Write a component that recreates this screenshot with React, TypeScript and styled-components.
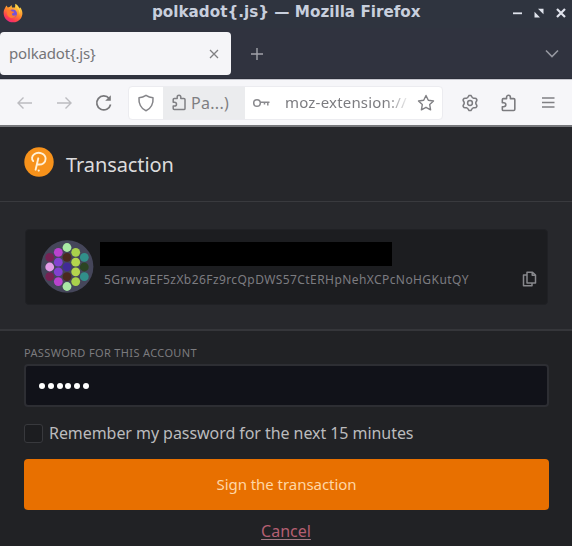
import React from 'react';
import styled, { createGlobalStyle } from 'styled-components';

const GlobalStyle = createGlobalStyle`
  * { box-sizing: border-box; }
  html, body { margin: 0; padding: 0; background: #212225; overflow: hidden; }
`;

const Window = styled.div`
  width: 572px;
  height: 546px;
  display: flex;
  flex-direction: column;
  overflow: hidden;
  background: #212225;
  font-family: 'Noto Sans', sans-serif;
`;

const Label = styled.span<{ $size: number; $spacing?: number; $color: string; $font?: string; $weight?: number }>`
  font-family: ${p => p.$font ?? "'Noto Sans'"}, sans-serif;
  font-size: ${p => p.$size}px;
  font-weight: ${p => p.$weight ?? 400};
  letter-spacing: ${p => p.$spacing ?? 0}px;
  color: ${p => p.$color};
  line-height: 1.25;
  white-space: nowrap;
`;

const TitleBar = styled.header`
  height: 28px;
  display: grid;
  grid-template-columns: 149px 1fr auto;
  align-items: center;
  padding: 0 4px 3px 3px;
  background: #2f343f;
`;
const TitleText = styled.div` display: flex; `;
const WindowButtons = styled.div` display: flex; gap: 8px; svg { display: block; } `;

const TabBar = styled.nav`
  height: 51px;
  display: flex;
  align-items: flex-start;
  padding-top: 4px;
  background: #30333f;
  border-bottom: 1px solid #2a2d38;
`;
const Tab = styled.div`
  width: 231px;
  height: 43px;
  display: flex;
  align-items: center;
  justify-content: space-between;
  padding: 0 11px 0 9px;
  border-radius: 4px;
  background: #f5f5f8;
`;
const TabAction = styled.div<{ $left?: number; $right?: number }>`
  height: 43px;
  display: flex;
  align-items: center;
  margin-left: ${p => (p.$left !== undefined ? `${p.$left}px` : 'auto')};
  margin-right: ${p => p.$right ?? 0}px;
`;

const Toolbar = styled.div`
  height: 48px;
  display: flex;
  align-items: center;
  padding: 0 15px 0 15px;
  background: #f6f6f9;
  border-top: 1px solid #c5c6cd;
  border-bottom: 2px solid #77787c;
`;
const NavButtons = styled.div` width: 113px; display: flex; gap: 20px; svg { display: block; } `;
const UrlBar = styled.div`
  width: 315px;
  height: 34px;
  display: flex;
  align-items: center;
  background: #fff;
  border: 1px solid #ececf0;
  border-radius: 4px;
  overflow: hidden;
`;
const Cell = styled.div<{ $w: number }>`
  width: ${p => p.$w}px;
  flex: none;
  display: flex;
  justify-content: center;
`;
const Identity = styled.div`
  width: 82px;
  flex: none;
  height: 32px;
  display: flex;
  align-items: center;
  gap: 3px;
  padding-left: 8px;
  background: #ebecee;
`;
const Address = styled.div`
  flex: 1;
  display: flex;
  padding-left: 7px;
  overflow: hidden;
  mask-image: linear-gradient(to right, #000 82%, rgba(0, 0, 0, 0.15) 98%);
`;
const ToolButtons = styled.div` margin-left: auto; display: flex; gap: 21px; svg { display: block; } `;

const PageHeader = styled.div`
  height: 75px;
  display: flex;
  align-items: center;
  gap: 12px;
  padding: 0 24px;
  background: #26272b;
  border-bottom: 1px solid #393a3e;
  > svg { margin-bottom: 4px; }
`;
const AccountArea = styled.section`
  height: 129px;
  padding: 27px 24px 0 25px;
  background: #27282c;
  border-bottom: 2px solid #35363a;
`;
const Card = styled.div`
  height: 76px;
  display: flex;
  align-items: center;
  padding: 0 10px 0 15px;
  border-radius: 4px;
  background: #1c1d20;
  border: 1px solid #202125;
  > svg { margin-bottom: 2px; }
`;
const AccountText = styled.div`
  flex: 1;
  height: 50px;
  margin-left: 6px;
  display: flex;
  flex-direction: column;
`;
const Redacted = styled.div` width: 292px; height: 24px; flex: none; background: #000; `;
const KeyText = styled.div` padding: 6px 0 0 4px; display: flex; `;
const CopyButton = styled.div` align-self: flex-end; padding-bottom: 17px; svg { display: block; } `;

const Form = styled.form`
  flex: 1;
  display: flex;
  flex-direction: column;
  padding: 14px 24px 0;
`;
const FieldLabel = styled.div` height: 19px; padding-top: 1px; display: flex; `;
const PasswordField = styled.div`
  height: 43px;
  width: 525px;
  display: flex;
  align-items: center;
  gap: 2.8px;
  padding-left: 13px;
  border: 2px solid #2d2e33;
  border-radius: 4px;
  background: #111219;
`;
const Dot = styled.i` width: 6px; height: 6px; border-radius: 50%; background: #fff; `;
const Remember = styled.label`
  height: 52px;
  display: flex;
  align-items: center;
  gap: 6px;
`;
const Checkbox = styled.span`
  width: 19px;
  height: 19px;
  border: 1px solid #38393d;
  border-radius: 3px;
  background: #1c1d20;
`;
const SignButton = styled.div`
  width: 525px;
  height: 51px;
  display: flex;
  align-items: center;
  justify-content: center;
  border-radius: 4px;
  background: #e87000;
`;
const CancelRow = styled.div` display: flex; justify-content: center; padding-top: 11px; `;
const CancelLabel = styled(Label)`
  text-decoration: underline;
  text-decoration-color: #a07a84;
  text-underline-offset: 2px;
`;

const FirefoxLogo = () => (
  <svg width="20" height="20" viewBox="0 0 20 20">
    <defs>
      <linearGradient id="flame" x1="0.8" y1="0.05" x2="0.25" y2="1">
        <stop offset="0" stopColor="#ffe14a" />
        <stop offset="0.45" stopColor="#ff8a2a" />
        <stop offset="0.8" stopColor="#fb3a53" />
        <stop offset="1" stopColor="#e5248b" />
      </linearGradient>
    </defs>
    <path d="M2 5 3.4 2.5 4.8 4.4 7 3.8 8.5 2 9 4.4 12 4.5 12.4.8C15.4 2.5 15.5 4 16.5 5.5L17 4.2C20 7.4 20.2 12.3 17.6 15.7 14.5 19.8 8.2 20.7 4 17.2.4 14.3-.4 8.8 2 5Z" fill="url(#flame)" />
    <path d="M6.3 8.4C8.5 5.2 14 6.5 14 10.8 14 14.2 10.1 15.7 7.5 13.7 5.9 12.5 5.3 10.2 6.3 8.4Z" fill="#7752d8" />
    <path d="M4 7.5C6 6 8 7 9 8.4 12 8.2 11.2 10 9.2 10.2 8.1 12.8 11 13.4 13 11.8 11.7 16.3 5.5 15.8 4.2 11.8Z" fill="#ff7a30" />
    <path d="M12.4 1C13.7 5 17.2 7 16.6 11.7 18 8.2 16 5.6 14.9 4.6Z" fill="#ffe04b" />
  </svg>
);

const PuzzleIcon = ({ size = 17, color = '#808084' }: { size?: number; color?: string }) => (
  <svg width={size} height={size} viewBox="0 0 17 17" fill="none" stroke={color} strokeWidth="1.5" strokeLinejoin="round">
    <path d="M2.2 6.2V5.4Q2.2 4.4 3.2 4.4H6.2V3C6.2.6 9.8.6 9.8 3V4.4H12.900Q14 4.400 14 5.500V14.500Q14 15.600 12.900 15.600H3.200Q2.200 15.600 2.200 14.600V12H3.400C6.200 12 6.200 8.300 3.400 8.300H2.200Z" />
  </svg>
);

const gear = Array.from({ length: 48 }, (_, i) => {
  const a = (i / 48) * Math.PI * 2;
  const r = 6.7 + 0.9 * Math.tanh(2.2 * Math.cos(6 * a));
  return `${(9 + r * Math.sin(a)).toFixed(2)},${(9 - r * Math.cos(a)).toFixed(2)}`;
}).join(' ');

const identiconDots: [number, number, string][] = [
  [26, 7.5, '#a9e9a5'],
  [17.3, 12.3, '#b943ce'], [34.7, 12.3, '#a9d04c'],
  [8.7, 17.3, '#752253'], [26, 17.3, '#4a2a1e'], [43.3, 17.3, '#318f8a'],
  [17.3, 22.2, '#8241d0'], [34.7, 22.2, '#b4d44e'],
  [8.7, 27, '#e49be7'], [26, 27, '#412b96'], [43.3, 27, '#2c4523'],
  [17.3, 31.8, '#8241d0'], [34.7, 31.8, '#b4d44e'],
  [8.7, 36.7, '#752253'], [26, 36.7, '#4a2a1e'], [43.3, 36.7, '#318f8a'],
  [17.3, 41.6, '#b943ce'], [34.7, 41.6, '#a9d04c'],
  [26, 46.5, '#a9e9a5'],
];

const Identicon = () => (
  <svg width="53" height="53" viewBox="0 0 53 53">
    <circle cx="26.2" cy="26.5" r="26.2" fill="#45465a" />
    {identiconDots.map(([x, y, fill]) => (
      <circle key={`${x}-${y}`} cx={x} cy={y} r="4.4" fill={fill} />
    ))}
  </svg>
);

const PolkadotLogo = () => (
  <svg width="30" height="30" viewBox="0 0 30 30">
    <circle cx="15" cy="15" r="14.7" fill="#f7921b" />
    <path d="M9.200 14C7.400 12.400 7.700 9 10.200 7.300 14.500 4.200 21.600 6.300 21.600 11.700 21.600 15.500 18.400 17.900 14.300 17.500M14.300 11.300 11.600 22.700" fill="none" stroke="#fff0d5" strokeWidth="1.900" strokeLinecap="round" />
    <circle cx="14.700" cy="23.600" r="1.100" fill="#fff0d5" />
  </svg>
);

export default function App() {
  return (
    <Window>
      <GlobalStyle />
      <TitleBar>
        <FirefoxLogo />
        <TitleText>
          <Label $size={15.2} $weight={700} $font="'DejaVu Sans'" $color="#c8cfdd">polkadot{'{'}.js{'}'} — Mozilla Firefox</Label>
        </TitleText>
        <WindowButtons>
          <svg width="14" height="14" viewBox="0 0 14 14"><path d="M3 7.3h9" stroke="#e0e3ec" strokeWidth="1.8" /></svg>
          <svg width="14" height="14" viewBox="0 0 14 14" fill="#e0e3ec"><path d="M6 2.800H11.500V8.200ZM2.500 5.800 8 11.500H2.500Z" /></svg>
          <svg width="14" height="14" viewBox="0 0 14 14"><path d="m3 3 8 8M11 3l-8 8" stroke="#e0e3ec" strokeWidth="2.2" /></svg>
        </WindowButtons>
      </TitleBar>

      <TabBar>
        <Tab>
          <Label $size={15} $spacing={-0.17} $color="#747477">polkadot{'{'}.js{'}'}</Label>
          <svg width="12" height="12" viewBox="0 0 12 12"><path d="m2 2 8 8M10 2l-8 8" stroke="#808083" strokeWidth="1.3" /></svg>
        </Tab>
        <TabAction $left={19}>
          <svg width="14" height="14" viewBox="0 0 14 14"><path d="M7 1v12M1 7h12" stroke="#a1a3aa" strokeWidth="1.4" /></svg>
        </TabAction>
        <TabAction $right={13}>
          <svg width="14" height="10" viewBox="0 0 14 10"><path d="m1 1.500 6 6 6-6" fill="none" stroke="#9597a0" strokeWidth="1.6" /></svg>
        </TabAction>
      </TabBar>

      <Toolbar>
        <NavButtons>
          <svg width="20" height="18" viewBox="0 0 20 18" fill="none" stroke="#bcbcc0" strokeWidth="1.4"><path d="M17 9H3M8.500 3.500 3 9l5.500 5.500" /></svg>
          <svg width="20" height="18" viewBox="0 0 20 18" fill="none" stroke="#bcbcc0" strokeWidth="1.4"><path d="M2 9h14M10.500 3.500 16 9l-5.500 5.500" /></svg>
          <svg width="18" height="18" viewBox="0 0 18 18" fill="none" stroke="#77777a" strokeWidth="1.7"><path d="M14.200 4.500A7 7 0 1 0 15.600 10.500" /><path d="M15.800 1.200v5.600h-5.600Z" fill="#77777a" stroke="none" /></svg>
        </NavButtons>
        <UrlBar>
          <Cell $w={34}>
            <svg width="18" height="18" viewBox="0 0 18 18" fill="none" stroke="#858589" strokeWidth="1.5" strokeLinejoin="round"><path d="M9 1.300C11.200 2.900 13.500 3.600 16 3.700 16.500 9 14.200 14.800 9 16.700 3.800 14.800 1.500 9 2 3.700 4.500 3.600 6.800 2.900 9 1.300Z" /></svg>
          </Cell>
          <Identity>
            <PuzzleIcon />
            <Label $size={16} $spacing={0.3} $color="#7f7f82">Pa...)</Label>
          </Identity>
          <Cell $w={33}>
            <svg width="19" height="12" viewBox="0 0 19 12" fill="none" stroke="#8a8a8e" strokeWidth="1.500"><circle cx="5" cy="6" r="3.300" /><path d="M8.300 5.200H17.500M12.500 5.200V7.500M15.800 5.200V8.500" /></svg>
          </Cell>
          <Address><Label $size={15} $spacing={0.2} $color="#7c7c80">moz-extension://</Label></Address>
          <Cell $w={32}>
            <svg width="18" height="18" viewBox="0 0 18 18" fill="none" stroke="#808084" strokeWidth="1.400" strokeLinejoin="round"><path d="m9 1.500 2.300 4.800 5.200.700-3.800 3.600.9 5.200L9 13.300l-4.600 2.500.9-5.200L1.500 7l5.200-.7Z" /></svg>
          </Cell>
        </UrlBar>
        <ToolButtons>
          <svg width="18" height="18" viewBox="0 0 18 18" fill="none" stroke="#7c7c80" strokeWidth="1.500"><polygon points={gear} /><circle cx="9" cy="9" r="2.400" /></svg>
          <PuzzleIcon size={18} color="#7b7b7f" />
          <svg width="18" height="18" viewBox="0 0 18 18"><path d="M3 4h12.500M3 8.500h12.500M3 13h12.500" stroke="#808084" strokeWidth="1.500" /></svg>
        </ToolButtons>
      </Toolbar>

      <PageHeader>
        <PolkadotLogo />
        <Label $size={20} $spacing={-0.1} $color="#dcdcdd">Transaction</Label>
      </PageHeader>

      <AccountArea>
        <Card>
          <Identicon />
          <AccountText>
            <Redacted />
            <KeyText><Label $size={12} $spacing={0.42} $color="#7c7c80">5GrwvaEF5zXb26Fz9rcQpDWS57CtERHpNehXCPcNoHGKutQY</Label></KeyText>
          </AccountText>
          <CopyButton>
            <svg width="15" height="16" viewBox="0 0 15 16" fill="none" stroke="#87888c" strokeWidth="1.500" strokeLinejoin="round"><path d="M5 1.200h5.500L13.500 4v8H5ZM10.200 1.200v3h3.300M5 4H1.500v10.800H10V12" /></svg>
          </CopyButton>
        </Card>
      </AccountArea>

      <Form>
        <FieldLabel><Label $size={11} $spacing={0.36} $color="#7b7b7e">PASSWORD FOR THIS ACCOUNT</Label></FieldLabel>
        <PasswordField>{Array.from({ length: 6 }, (_, i) => <Dot key={i} />)}</PasswordField>
        <Remember>
          <Checkbox />
          <Label $size={16} $spacing={-0.06} $color="#bbbbbd">Remember my password for the next 15 minutes</Label>
        </Remember>
        <SignButton><Label $size={15} $spacing={-0.05} $color="#ffd7a6">Sign the transaction</Label></SignButton>
        <CancelRow><CancelLabel $size={16} $color="#b45f72">Cancel</CancelLabel></CancelRow>
      </Form>
    </Window>
  );
}
